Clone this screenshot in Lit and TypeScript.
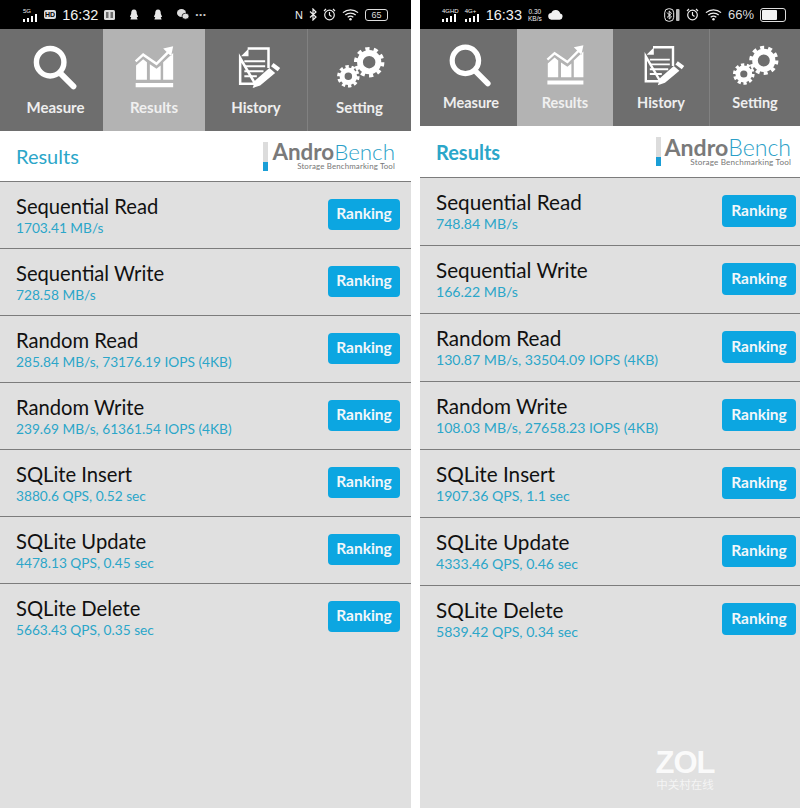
import { LitElement, html, css, svg } from "lit";
import { customElement, property } from "lit/decorators.js";

const icons: Record<string, unknown> = {
  Measure: svg`<svg class="ico" viewBox="0 0 60 60"><circle cx="23" cy="23" r="16.500" fill="none" stroke="#fff" stroke-width="6.500"/><path d="M36 37 L51 52" stroke="#fff" stroke-width="7" stroke-linecap="round"/></svg>`,
  Results: svg`<svg class="ico" viewBox="0 0 60 60"><path fill="none" stroke="#fff" stroke-width="3" d="M8 22L17 14L33 25L49 9"/><path fill="#fff" d="M53 4L41 6.500L50.500 16zM8.500 44V27L17 19.500L21.500 23V44zM25 44V25.500L33 31L38 27V44zM41 44V23L53 12V44zM8 48h45v5H8z"/></svg>`,
  History: svg`<svg class="ico" viewBox="0 0 60 60"><path fill="none" stroke="#fff" stroke-width="3" d="M20 6.500H45V30M29 49H11V18z"/><path fill="#fff" d="M12 16h9V7z"/><path stroke="#fff" stroke-width="2.400" d="M16 22h25M16 28h25M16 34h23M16 40h15"/><path fill="#fff" d="M46 30l7 6-18 15-9 3 3-9zM48 28l3-4 8 6-3 4z"/></svg>`,
  Setting: svg`<svg class="ico" viewBox="0 0 60 60"><g fill="none" stroke="#fff"><circle cx="41" cy="23" r="11" stroke-width="7"/><circle cx="41" cy="23" r="16" stroke-width="4.500" stroke-dasharray="5 5.050"/><circle cx="16" cy="40" r="7.500" stroke-width="6"/><circle cx="16" cy="40" r="11.500" stroke-width="4" stroke-dasharray="4 3.200"/></g></svg>`,
};

const bars = svg`<svg width="15" height="8" viewBox="0 0 15 8"><path fill="#fff" d="M0 5h2v3H0zM4 4h2v4H4zM8 2h2v6H8zM12 0h2v8h-2z"/></svg>`;
const bell = svg`<svg width="10" height="12" viewBox="0 0 11 12"><path fill="#e8e8e8" d="M5.500 0C3 0 2.400 2 2.400 4.500L1 8l1.500.5L1.500 11h8l-1-2.500L10 8 8.600 4.500C8.600 2 8 0 5.500 0z"/></svg>`;
const sim = svg`<svg width="11" height="10" viewBox="0 0 11 10"><rect width="11" height="10" rx="1.500" fill="#ddd"/><path stroke="#000" d="M2 3h2.500M2 5h2.500M2 7h2.500M6.500 3H9M6.500 5H9M6.500 7H9"/></svg>`;
const wechat = svg`<svg width="12" height="11" viewBox="0 0 12 11"><ellipse cx="4.500" cy="4" rx="4.500" ry="4" fill="#ddd"/><ellipse cx="8.500" cy="7.200" rx="3.500" ry="3" fill="#ddd" stroke="#000" stroke-width=".7"/></svg>`;
const wifi = svg`<svg width="17" height="13" viewBox="0 0 18 13"><g fill="none" stroke="#eee" stroke-width="1.300"><path d="M1 4.500c4.500-4 11.500-4 16 0M3.500 7c3-2.600 8-2.600 11 0M6 9.400c1.800-1.400 4.200-1.400 6 0"/></g><circle cx="9" cy="11.500" r="1.300" fill="#eee"/></svg>`;
const alarm = svg`<svg width="13" height="13" viewBox="0 0 13 13"><circle cx="6.500" cy="7" r="4.800" fill="none" stroke="#eee" stroke-width="1.200"/><path d="M6.500 4v3l2 1.500M1 3l2-2M12 3l-2-2" fill="none" stroke="#eee" stroke-width="1.200"/></svg>`;
const bt = svg`<svg width="8" height="13" viewBox="0 0 8 13"><path d="M1 3.500l6 5.500-3 3V1l3 3-6 5.500" fill="none" stroke="#eee" stroke-width="1.200"/></svg>`;
const btBox = svg`<svg width="16" height="14" viewBox="0 0 16 14"><rect x=".7" y=".7" width="9" height="12.600" rx="4" fill="none" stroke="#eee"/><path d="M3 4.500l4.500 4.500L5.200 11V3l2.300 2.300L3 9.500" fill="none" stroke="#eee"/><rect x="12" y="1" width="3.500" height="12" rx="1" fill="#bbb"/></svg>`;

@customElement("phone-panel")
class PhonePanel extends LitElement {
  @property() variant = "a";
  @property({ attribute: false }) rows: [string, string][] = [];
  static styles = css`
    :host { display: flex; flex-direction: column; min-width: 0; background: #e0e0e0; font-family: "Lato", "Open Sans", sans-serif; }
    :host([variant="a"]) { width: 411px; --nav: 102px; --head: 50px; --row: 67px; --right: 11px; --tw: 72px; --th: 31px; --ico: 50px; --lab: 15px; --hw: 400; --sub: 13.700px; --title: 20.200px; --cols: 103px 102px 103px 103px; --navpad: 14px; --labgap: 5px; --shift: 8px; --hr: 16px; --ab: 22.400px; --tool: 7.900px; --abw: 20px; --mgap: 4px; }
    :host([variant="b"]) { width: 380px; --nav: 97px; --head: 51px; --row: 68px; --right: 4px; --tw: 74px; --th: 32px; --ico: 48px; --lab: 14.500px; --hw: 700; --sub: 14.100px; --title: 20.700px; --cols: 97px 96px 97px 90px; --navpad: 13px; --labgap: 4px; --shift: 5px; --hr: 9px; --ab: 23.100px; --tool: 8.150px; --abw: 21px; --mgap: 4px; }
    .status { height: 29px; background: #000; color: #eee; display: flex; align-items: center; justify-content: space-between; font-family: "Liberation Sans", sans-serif; box-sizing: border-box; padding: 0 23px 0 23px; }
    :host([variant="b"]) .status { padding: 0 14px 0 22px; }
    .side { display: flex; align-items: center; gap: 6px; }
    .sp { margin-left: 2px; }
    .time { font-size: 14.500px; color: #f2f2f2; }
    .net { display: flex; flex-direction: column; align-items: flex-start; font-size: 6px; line-height: 6px; }
    .tag { font-size: 7px; font-weight: 700; background: #ddd; color: #000; border-radius: 2px; padding: 0 1px; line-height: 9px; }
    .speed { font-size: 6.500px; line-height: 7px; text-align: center; }
    .dots { font-size: 8px; letter-spacing: 1px; color: #ccc; }
    .nfc { font-size: 11px; }
    .pct { font-size: 13px; color: #ddd; }
    .bat { width: 21px; height: 10px; border: 1px solid #ddd; border-radius: 3px; font-size: 9px; line-height: 10px; text-align: center; color: #ddd; }
    .bat2 { width: 22px; height: 10px; border: 1px solid #ddd; border-radius: 3px; padding: 1px; box-sizing: content-box; display: flex; }
    .bat2 i { width: 66%; background: #f2f2f2; border-radius: 1px; }
    .nav { display: grid; grid-template-columns: var(--cols); height: var(--nav); background: #6e6e6e; }
    .tab { display: flex; flex-direction: column; align-items: center; justify-content: flex-start; padding-top: var(--navpad); color: #eee; font-size: var(--lab); font-weight: 700; border-right: 1px solid #818181; box-sizing: border-box; min-width: 0; }
    .tab:first-child { padding-left: var(--shift); border-right: 0; }
    .tab:last-child { border-right: 0; }
    .tab.on { background: #b3b3b3; border-right: 0; color: #f0f0f0; }
    .ico { width: var(--ico); height: var(--ico); display: block; margin-bottom: var(--labgap); flex: none; }
    .head { height: var(--head); background: #fff; display: flex; align-items: center; justify-content: space-between; padding: 0 var(--hr) 0 16px; box-sizing: border-box; }
    .htitle { color: #2ba6c9; font-size: 20px; font-weight: var(--hw); }
    .logo { display: flex; gap: var(--mgap); align-items: stretch; }
    .mark { width: 5px; height: 29px; background: linear-gradient(#dcdcdc 0 70%, #1a9ed6 70%); }
    .lt { display: flex; flex-direction: column; align-items: flex-end; }
    .ab { font-size: var(--ab); line-height: var(--abw); color: #2b9fc8; font-weight: 300; letter-spacing: 0; }
    .ab b { color: #7a7a7a; font-weight: 700; }
    .tool { font-size: var(--tool); line-height: 9px; color: #777; letter-spacing: .15px; }
    .list { display: flex; flex-direction: column; }
    .row { height: var(--row); box-sizing: border-box; border-top: 1.500px solid #7c7c7c; display: flex; align-items: center; justify-content: space-between; padding: 0 var(--right) 2px 16px; }
    .txt { margin-top: 3px; }
    .t { font-size: var(--title); line-height: 24px; color: #111; }
    .s { font-size: var(--sub); line-height: 20px; color: #2ba6c9; }
    .rank { width: var(--tw); height: var(--th); background: #0ca6e1; color: #f2f7fa; font-weight: 700; font-size: 15.500px; border-radius: 4px; display: flex; align-items: center; justify-content: center; padding-bottom: 2px; box-sizing: border-box; }
  `;
  render() {
    const a = this.variant === "a";
    return html`
      <div class="status">
        ${a
          ? html`<div class="side"><span class="net">5G${bars}</span><span class="tag">HD</span><span class="time">16:32</span>${sim}<span class="sp"></span>${bell}<span class="sp"></span>${bell}<span class="sp"></span>${wechat}<span class="dots">•••</span></div>
              <div class="side"><span class="nfc">N</span>${bt}${alarm}${wifi}<span class="bat">65</span></div>`
          : html`<div class="side"><span class="net">4GHD${bars}</span><span class="net">4G+${bars}</span><span class="time">16:33</span><span class="speed">0.30<br />KB/s</span><svg width="15" height="11" viewBox="0 0 16 11"><path fill="#f2f2f2" d="M4 11a3.500 3.500 0 0 1-.5-7A5 5 0 0 1 13 4.500 3.300 3.300 0 0 1 12.500 11z"/></svg></div>
              <div class="side">${btBox}${alarm}${wifi}<span class="pct">66%</span><span class="bat2"><i></i></span></div>`}
      </div>
      <div class="nav">
        ${["Measure", "Results", "History", "Setting"].map(
          (n) => html`<div class="tab ${n === "Results" ? "on" : ""}">${icons[n]}<span>${n}</span></div>`
        )}
      </div>
      <div class="head">
        <span class="htitle">Results</span>
        <div class="logo">
          <div class="mark"></div>
          <div class="lt"><span class="ab"><b>Andro</b>Bench</span><span class="tool">Storage Benchmarking Tool</span></div>
        </div>
      </div>
      <div class="list">
        ${this.rows.map(
          ([t, s]) => html`<div class="row">
            <div class="txt"><div class="t">${t}</div><div class="s">${s}</div></div>
            <div class="rank">Ranking</div>
          </div>`
        )}
      </div>
    `;
  }
}

const left: [string, string][] = [
  ["Sequential Read", "1703.41 MB/s"],
  ["Sequential Write", "728.58 MB/s"],
  ["Random Read", "285.84 MB/s, 73176.19 IOPS (4KB)"],
  ["Random Write", "239.69 MB/s, 61361.54 IOPS (4KB)"],
  ["SQLite Insert", "3880.6 QPS, 0.52 sec"],
  ["SQLite Update", "4478.13 QPS, 0.45 sec"],
  ["SQLite Delete", "5663.43 QPS, 0.35 sec"],
];
const right: [string, string][] = [
  ["Sequential Read", "748.84 MB/s"],
  ["Sequential Write", "166.22 MB/s"],
  ["Random Read", "130.87 MB/s, 33504.09 IOPS (4KB)"],
  ["Random Write", "108.03 MB/s, 27658.23 IOPS (4KB)"],
  ["SQLite Insert", "1907.36 QPS, 1.1 sec"],
  ["SQLite Update", "4333.46 QPS, 0.46 sec"],
  ["SQLite Delete", "5839.42 QPS, 0.34 sec"],
];

@customElement("app-root")
export class AppRoot extends LitElement {
  static styles = css`
    :host { display: block; width: 800px; height: 808px; background: #fff; position: relative; overflow: hidden; }
    .wrap { display: flex; justify-content: space-between; height: 100%; }
    .wm { position: absolute; left: 655px; top: 748px; width: 60px; text-align: center; color: rgba(255,255,255,.85); font-family: "Liberation Sans", sans-serif; }
    .wm b { display: block; font-size: 31px; line-height: 30px; letter-spacing: -1px; }
    .wm span { display: block; font-size: 11.500px; line-height: 12px; font-family: "Noto Sans CJK SC", sans-serif; opacity: .8; }
  `;
  render() {
    return html`<div class="wrap">
        <phone-panel variant="a" .rows=${left}></phone-panel>
        <phone-panel variant="b" .rows=${right}></phone-panel>
      </div>
      <div class="wm"><b>ZOL</b><span>中关村在线</span></div>`;
  }
}
